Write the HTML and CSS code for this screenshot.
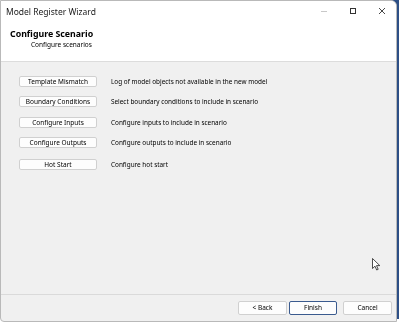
FILE: index.html
```html
<!DOCTYPE html>
<html lang="en">
<head>
  <meta charset="UTF-8" />
  <title>Model Register Wizard</title>
  <link rel="stylesheet" href="styles.css">
</head>
<body>
  <div class="window">
    <div class="titlebar">
      <span class="title">Model Register Wizard</span>
      <div class="controls">
        <span class="ctl ctl-min"><svg width="8" height="8" viewBox="0 0 8 8"><path d="M1 4.5h6" stroke="#c8c8c8" stroke-width="1"/></svg></span>
        <span class="ctl"><svg width="8" height="8" viewBox="0 0 8 8"><rect x="1.5" y="1.5" width="5" height="5" fill="none" stroke="#333" stroke-width="1"/></svg></span>
        <span class="ctl"><svg width="8" height="8" viewBox="0 0 8 8"><path d="M1 1l6 6M7 1l-6 6" stroke="#333" stroke-width="0.9"/></svg></span>
      </div>
    </div>

    <div class="header">
      <div class="header-title">Configure Scenario</div>
      <div class="header-sub">Configure scenarios</div>
    </div>

    <div class="content">
      <div class="row">
        <button class="btn">Template Mismatch</button>
        <span class="desc">Log of model objects not available in the new model</span>
      </div>
      <div class="row">
        <button class="btn">Boundary Conditions</button>
        <span class="desc">Select boundary conditions to include in scenario</span>
      </div>
      <div class="row">
        <button class="btn">Configure Inputs</button>
        <span class="desc">Configure inputs to include in scenario</span>
      </div>
      <div class="row">
        <button class="btn">Configure Outputs</button>
        <span class="desc">Configure outputs to include in scenario</span>
      </div>
      <div class="row row-last">
        <button class="btn">Hot Start</button>
        <span class="desc">Configure hot start</span>
      </div>

      <svg class="cursor" width="9" height="13" viewBox="0 0 9 13">
        <path d="M0.5 0.5v10l2.5-2.3 1.7 3.8 1.5-0.7-1.7-3.7h3.3z" fill="#fff" stroke="#222" stroke-width="0.8" stroke-linejoin="round"/>
      </svg>
    </div>

    <div class="footer">
      <button class="btn nav"><u>&lt; B</u>ack</button>
      <button class="btn nav primary"><u>F</u>inish</button>
      <button class="btn nav cancel">Cancel</button>
    </div>
  </div>
</body>
</html>
```

FILE: styles.css
```css
body {
  margin: 0;
  background: #fff;
  font-family: "Noto Sans", "Open Sans", sans-serif;
  color: #000;
}

.window {
  position: relative;
  width: 395px;
  height: 320px;
  border: 1px solid #b9b9b9;
  border-top-right-radius: 6px;
  border-bottom-left-radius: 4px;
  background: #f0f0f0;
  display: flex;
  flex-direction: column;
  overflow: hidden;
  box-shadow: 3px -3px 0 #2d4f86;
  will-change: transform;
}

.titlebar {
  height: 22px;
  background: #fff;
  display: flex;
  align-items: center;
  justify-content: space-between;
  padding: 0 0 0 5px;
}

.title {
  font-size: 8.5px;
  margin-top: -2px;
  color: #1a1a1a;
}

.controls {
  display: flex;
  margin-top: -3px;
}

.ctl {
  width: 29px;
  display: flex;
  justify-content: center;
}

.header {
  height: 39px;
  background: #fff;
  border-bottom: 1px solid #dcdcdc;
  padding: 6px 0 0 9px;
  box-sizing: border-box;
}

.header-title {
  font-size: 8.8px;
  font-weight: bold;
  line-height: 11px;
}

.header-sub {
  font-size: 6.5px;
  line-height: 10px;
  padding-left: 21px;
}

.content {
  position: relative;
  flex: 1;
  padding: 9px 0 0 18px;
}

.row {
  display: flex;
  align-items: center;
  height: 20.5px;
}

.row-last {
  margin-top: 1.5px;
}

.btn {
  font-family: inherit;
  font-size: 6.5px;
  color: #000;
  background: #fdfdfd;
  border: 1px solid #d0d0d0;
  border-radius: 2px;
  padding: 0;
  height: 11px;
  line-height: 9px;
  width: 78px;
}

.desc {
  font-size: 6.4px;
  margin-left: 14px;
}

.cursor {
  position: absolute;
  left: 371px;
  top: 196px;
}

.footer {
  height: 27px;
  border-top: 1px solid #dadada;
  display: flex;
  align-items: center;
  justify-content: flex-end;
  padding-right: 4px;
  padding-bottom: 1px;
  box-sizing: border-box;
}

.nav {
  width: 49px;
  height: 14px;
  margin-left: 2px;
}

.nav u {
  text-decoration: none;
}

.primary {
  border: 1.5px solid #3a5a8e;
  width: 48px;
}

.cancel {
  margin-left: 6px;
}
```
